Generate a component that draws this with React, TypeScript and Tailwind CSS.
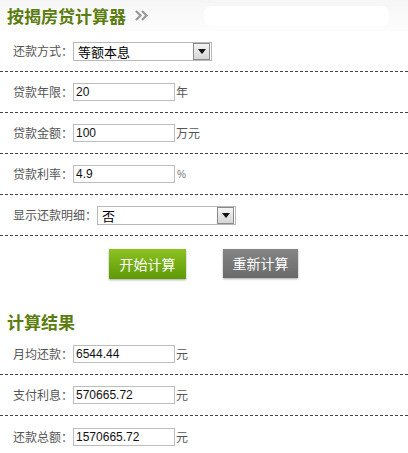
import React from "react";

const cjk = { fontFamily: '"Noto Sans CJK SC", "Liberation Sans", sans-serif' };
const num = { fontFamily: '"Liberation Sans", "Noto Sans CJK SC", sans-serif' };

function Arrow() {
  return (
    <div className="flex h-[17px] w-[17px] items-center justify-center border border-[#8a8a8a] bg-gradient-to-b from-[#f4f4f4] to-[#d6d6d6]">
      <svg width="8" height="5" viewBox="0 0 8 5">
        <path d="M0 0 L8 0 L4 5 Z" fill="#111" />
      </svg>
    </div>
  );
}

function FakeSelect({ value, width }: { value: string; width: string }) {
  return (
    <div
      className={`flex h-[19px] items-center justify-between border border-[#b9b9b9] bg-white pl-[4px] pr-[1px] ${width}`}
    >
      <span className="text-[13px] leading-none text-black" style={cjk}>
        {value}
      </span>
      <Arrow />
    </div>
  );
}

function Field({ value }: { value: string }) {
  return (
    <div
      className="flex h-[18px] w-[102px] items-center border border-[#bdbdbd] bg-white pl-[2px] text-[12px] text-[#111]"
      style={num}
    >
      {value}
    </div>
  );
}

function Row({
  label,
  children,
  last,
}: {
  label: string;
  children: React.ReactNode;
  last?: boolean;
}) {
  return (
    <div
      className={`flex h-[41px] items-center pl-[13px] ${
        last ? "" : "border-b border-dashed border-[#444]"
      }`}
    >
      <span className="text-[12px] text-[#555]" style={cjk}>
        {label}
      </span>
      {children}
    </div>
  );
}

function Unit({ text }: { text: string }) {
  return (
    <span className="ml-[1px] text-[12px] text-[#555]" style={cjk}>
      {text}
    </span>
  );
}

export default function App() {
  return (
    <div className="h-[453px] w-[408px] overflow-hidden bg-white" style={cjk}>
      <div className="flex h-[31px] items-center bg-gradient-to-b from-[#f6f6f6] to-[#fdfdfd] pl-[7px]">
        <h2 className="text-[17px] font-bold leading-none text-[#5b7c0e]">按揭房贷计算器</h2>
        <svg className="ml-[9px]" width="14" height="11" viewBox="0 0 14 11">
          <path d="M1 1 L5.5 5.5 L1 10" fill="none" stroke="#9a9a9a" strokeWidth="2.4" />
          <path d="M7 1 L11.5 5.5 L7 10" fill="none" stroke="#9a9a9a" strokeWidth="2.4" />
        </svg>
        <div className="ml-[55px] h-[20px] w-[185px] rounded-[8px] bg-white" />
      </div>

      <Row label="还款方式：">
        <FakeSelect value="等额本息" width="w-[139px]" />
      </Row>
      <Row label="贷款年限：">
        <Field value="20" />
        <Unit text="年" />
      </Row>
      <Row label="贷款金额：">
        <Field value="100" />
        <Unit text="万元" />
      </Row>
      <Row label="贷款利率：">
        <Field value="4.9" />
        <span className="ml-[2px] text-[10px] text-[#777]" style={num}>
          %
        </span>
      </Row>
      <Row label="显示还款明细：">
        <FakeSelect value="否" width="w-[139px]" />
      </Row>

      <div className="flex h-[68px] items-start pt-[13px]">
        <button
          className="ml-[109px] h-[30px] w-[77px] bg-gradient-to-b from-[#8cc220] to-[#5e9a06] text-[14px] text-white shadow-[0_1px_2px_rgba(0,0,0,0.35)]"
          style={cjk}
        >
          开始计算
        </button>
        <button
          className="ml-[37px] h-[29px] w-[75px] bg-gradient-to-b from-[#858585] to-[#6a6a6a] text-[14px] text-white shadow-[0_1px_2px_rgba(0,0,0,0.35)]"
          style={cjk}
        >
          重新计算
        </button>
      </div>

      <div className="flex h-[30px] items-center pl-[7px] pt-[4px]">
        <h2 className="text-[17px] font-bold leading-none text-[#5b7c0e]">计算结果</h2>
      </div>

      <Row label="月均还款：">
        <Field value="6544.44" />
        <Unit text="元" />
      </Row>
      <Row label="支付利息：">
        <Field value="570665.72" />
        <Unit text="元" />
      </Row>
      <Row label="还款总额：" last>
        <Field value="1570665.72" />
        <Unit text="元" />
      </Row>
    </div>
  );
}
